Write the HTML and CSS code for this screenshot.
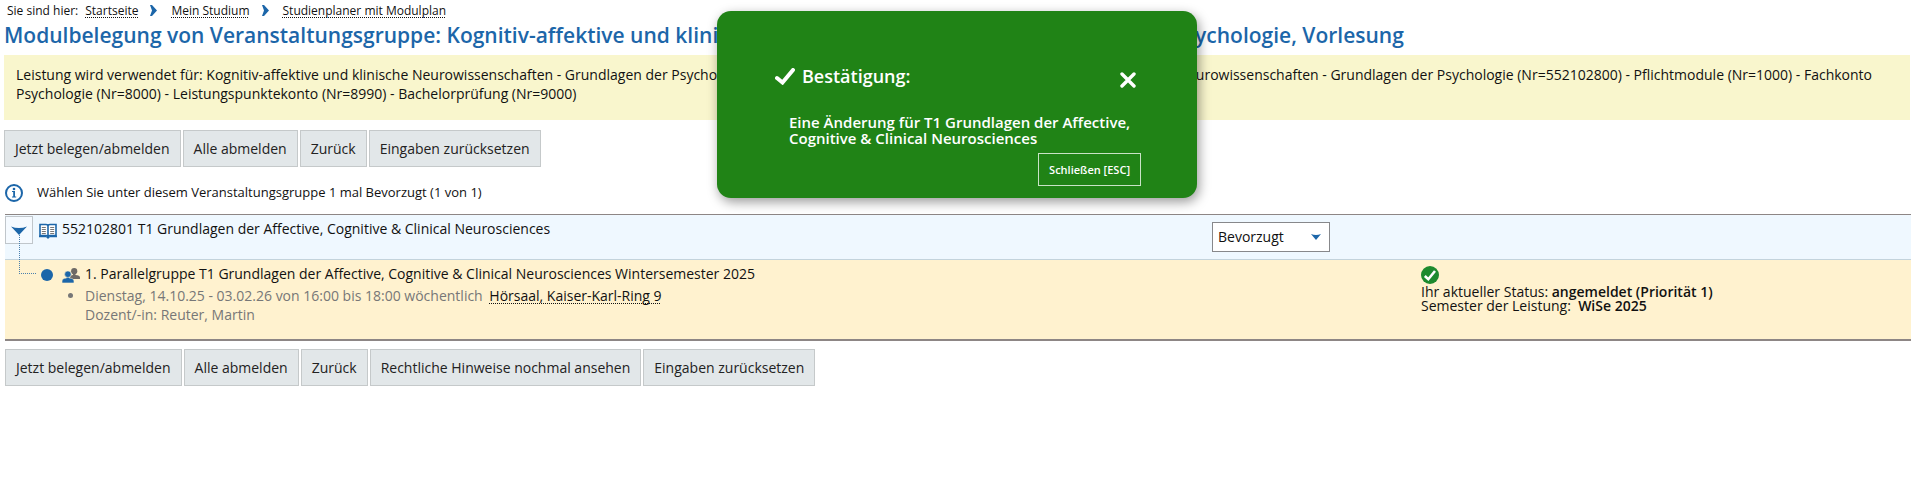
FILE: index.html
```html
<!DOCTYPE html>
<html lang="de">
<head>
<meta charset="utf-8">
<title>Modulbelegung</title>
<link rel="stylesheet" href="styles.css">
</head>
<body>
<nav class="breadcrumb" aria-label="Sie sind hier">
  <span>Sie sind hier:</span>
  <a href="#">Startseite</a>
  <svg class="sep" width="7" height="11" viewBox="0 0 7 11"><path d="M0 0 L2 0 L7 5.5 L2 11 L0 11 L2 5.5 Z" fill="#1c66a9"/></svg>
  <a href="#">Mein Studium</a>
  <svg class="sep" width="7" height="11" viewBox="0 0 7 11"><path d="M0 0 L2 0 L7 5.5 L2 11 L0 11 L2 5.5 Z" fill="#1c66a9"/></svg>
  <a href="#">Studienplaner mit Modulplan</a>
</nav>

<form id="form" name="form" method="post" action="#">
  <h1>Modulbelegung von Veranstaltungsgruppe: Kognitiv-affektive und klinische Neurowissenschaften - Grundlagen der Psychologie, Vorlesung</h1>
  <p class="notice">Leistung wird verwendet für: Kognitiv-affektive und klinische Neurowissenschaften - Grundlagen der Psychologie, Vorlesung (T 1) (Nr=552102801) - Kognitiv-affektive und klinische Neurowissenschaften - Grundlagen der Psychologie (Nr=552102800) - Pflichtmodule (Nr=1000) - Fachkonto Psychologie (Nr=8000) - Leistungspunktekonto (Nr=8990) - Bachelorprüfung (Nr=9000)</p>

  <div class="buttons">
    <button type="button">Jetzt belegen/abmelden</button>
    <button type="button">Alle abmelden</button>
    <button type="button">Zurück</button>
    <button type="reset">Eingaben zurücksetzen</button>
  </div>

  <p class="info">
    <svg width="18" height="18" viewBox="0 0 18 18"><circle cx="9" cy="9" r="8" fill="#fff" stroke="#1c66a9" stroke-width="2"/><circle cx="9" cy="5" r="1.3" fill="#1c66a9"/><path d="M7 7h3v5.5h1.2v1H7v-1h1.2V8H7z" fill="#1c66a9"/></svg>
    <span>Wählen Sie unter diesem Veranstaltungsgruppe 1 mal Bevorzugt (1 von 1)</span>
  </p>

  <table class="tree">
    <tr class="event">
      <td>
        <div class="node">
          <button type="button" class="toggle" aria-label="Zuklappen">
            <svg width="16" height="9" viewBox="0 0 16 9"><path d="M0 0.5 Q8 3.5 16 0.5 L8 9 Z" fill="#1c66a9"/></svg>
            <span class="branch"></span>
          </button>
          <svg class="book" width="18" height="16" viewBox="0 0 18 16">
            <path d="M1 1.5h6Q9 1.5 9 3Q9 1.5 11 1.5h6v11h-6Q9 12.5 9 14Q9 12.5 7 12.5H1z" fill="#fff" stroke="#1c66a9" stroke-width="1.6"/>
            <path d="M9 3v11M0 13.4h7.5M10.5 13.4H18" stroke="#1c66a9" stroke-width="1.6"/>
            <path d="M2.8 4.5h4M2.8 6.5h4M2.8 8.5h4M2.8 10.5h4M11.2 4.5h4M11.2 6.5h4M11.2 8.5h4M11.2 10.5h4" stroke="#777"/>
            <path d="M7.5 13h3v1.5L9 16l-1.5-1.5z" fill="#1c66a9"/>
          </svg>
          <label for="prio">552102801 T1 Grundlagen der Affective, Cognitive &amp; Clinical Neurosciences</label>
        </div>
      </td>
      <td class="choice">
        <select id="prio" name="prio"><option>Bevorzugt</option></select>
      </td>
      <td class="status"></td>
    </tr>
    <tr class="group">
      <td>
        <div class="node">
          <span class="dot"></span>
          <svg class="people" width="18" height="15" viewBox="0 0 18 15">
            <g fill="#6e6a66"><circle cx="12.2" cy="3.2" r="3.1"/><path d="M8 11V9.5Q8 7 11 6.9V5h2.4v1.9Q18 7.2 18 9.5V11z"/></g>
            <g fill="#1c66a9" stroke="#fff2cf" stroke-width="0.6"><path d="M0 15v-2Q0 10.4 4.5 10V8.6h2.8V10Q12 10.4 12 13v2z"/><circle cx="5.9" cy="6.2" r="3.3"/></g>
          </svg>
          <div>
            <span>1. Parallelgruppe T1 Grundlagen der Affective, Cognitive &amp; Clinical Neurosciences Wintersemester 2025</span>
            <ul>
              <li>Dienstag, 14.10.25 - 03.02.26 von 16:00 bis 18:00 wöchentlich <a href="#">Hörsaal, Kaiser-Karl-Ring 9</a><br>Dozent/-in: Reuter, Martin</li>
            </ul>
          </div>
        </div>
      </td>
      <td class="choice"></td>
      <td class="status">
        <svg width="18" height="18" viewBox="0 0 18 18"><circle cx="9" cy="9" r="9" fill="#1d8a2e"/><path d="M3.8 10 L7.3 13.2 L14 5" fill="none" stroke="#fff" stroke-width="2.6"/></svg>
        <div>Ihr aktueller Status: <b>angemeldet (Priorität 1)</b></div>
        <div>Semester der Leistung: &nbsp;<b>WiSe 2025</b></div>
      </td>
    </tr>
  </table>

  <div class="buttons bottom">
    <button type="button">Jetzt belegen/abmelden</button>
    <button type="button">Alle abmelden</button>
    <button type="button">Zurück</button>
    <button type="button">Rechtliche Hinweise nochmal ansehen</button>
    <button type="reset">Eingaben zurücksetzen</button>
  </div>
</form>

<div class="dialog" role="dialog" aria-labelledby="dialog-title">
  <div class="head">
    <svg width="20" height="17" viewBox="0 0 20 17"><path d="M2 10 L7.5 14.5 L18 2" fill="none" stroke="#fff" stroke-width="4" stroke-linecap="round"/></svg>
    <h2 id="dialog-title">Bestätigung:</h2>
    <button type="button" class="close" aria-label="Schließen">
      <svg width="16" height="16" viewBox="0 0 16 16"><path d="M2 2 L14 14 M14 2 L2 14" stroke="#fff" stroke-width="3.4" stroke-linecap="round"/></svg>
    </button>
  </div>
  <p>Eine Änderung für T1 Grundlagen der Affective, Cognitive &amp; Clinical Neurosciences</p>
  <button type="button" class="esc">Schließen [ESC]</button>
</div>
</body>
</html>
```

FILE: styles.css
```css
* { box-sizing: border-box; }
body { margin: 0; font-family: "Open Sans", "Noto Sans", Arial, sans-serif; font-size: 14px; line-height: 19px; color: #111; background-color: #fff; }
a { color: #111; text-decoration: underline dotted 1px; text-underline-offset: 2px; text-decoration-skip-ink: none; }

.breadcrumb { display: flex; align-items: center; padding: 4px 0 0 7px; font-size: 12px; line-height: 13px; }
.breadcrumb span { margin-right: 7px; }
.breadcrumb .sep { margin: 0 14px 0 12px; }

h1 { margin: 3px 0 5px 4px; font-size: 21px; line-height: 30px; font-weight: 600; color: #1c66a9; }
.notice { margin: 0 2px 10px 4px; padding: 10px 12px 17px; background-color: #f9f6cd; }

.buttons { display: flex; flex-wrap: wrap; gap: 2px; margin-left: 4px; }
.buttons.bottom { margin: 8px 0 0 5px; }
.buttons button { height: 37px; padding: 0 10px 1px; font: inherit; color: #222; background-color: #e2e7e9; border: solid 1px #c5c9ca; }

.info { display: flex; align-items: center; gap: 14px; margin: 16px 0 12px 5px; font-size: 13px; }

.tree { width: calc(100% - 6px); margin-left: 5px; border-collapse: separate; border-spacing: 0; border-top: solid 1px #8d8685; border-bottom: solid 2px #8d8685; }
.tree td { padding: 0; vertical-align: top; }
.event td { height: 45px; background-color: #eff8ff; border-bottom: solid 1px #c3d3dc; }
.group td { height: 79px; background-color: #fff2cf; }
.choice { width: 209px; }
.status { width: 490px; }
.node { display: flex; }

.toggle { position: relative; width: 28px; height: 28px; margin: 1px 6px 0 0; padding: 0; background-color: #f5faff; border: solid 1px #c0c6cb; }
.toggle svg { display: block; margin: 0 auto; }
/* line from the toggle down to the parallel group */
.branch { position: absolute; left: 13px; top: 18px; width: 17px; height: 39px; border-left: dotted 1px #4a80ad; border-bottom: dotted 1px #4a80ad; }
.book { margin-top: 8px; }
.event label { margin: 4px 0 0 5px; }
.choice select { display: block; width: 118px; height: 30px; margin-top: 7px; padding: 0 5px 2px; font: inherit; color: #111; border: solid 1px #87888b; border-radius: 0; appearance: none; background: #fff url("data:image/svg+xml,%3Csvg xmlns='http://www.w3.org/2000/svg' width='10' height='6'%3E%3Cpath d='M0 0Q5 2 10 0L5 6Z' fill='%231c66a9'/%3E%3C/svg%3E") no-repeat right 8px center; }

.group .node { padding: 4px 0 0 36px; }
.dot { width: 12px; height: 12px; margin: 5px 9px 0 0; border-radius: 50%; background-color: #1c66a9; }
.people { margin: 4px 5px 0 0; }
.group ul { margin: 3px 0 0; padding: 0; color: #777; }
.group li a { margin-left: 3px; }
.group .status { padding-top: 6px; line-height: 14px; }
.status svg { display: block; margin-bottom: 1px; }
.status b { font-weight: 600; }

.dialog { position: absolute; top: 11px; left: 2px; right: 0; width: 480px; margin: 0 auto; padding: 53px 56px 12px 58px; color: #fff; background-color: #208316; border-radius: 14px; box-shadow: 2px 4px 12px rgba(0, 0, 0, 0.4); }
.head { display: flex; align-items: center; gap: 7px; }
.head h2 { flex: 1; margin: 0; font-size: 18px; line-height: 24px; font-weight: 600; }
.close { height: 16px; margin: 8px 5px 0 0; padding: 0; background: none; border: 0; }
.close svg { display: block; }
.dialog p { margin: 26px 0 7px 14px; font-size: 15px; line-height: 16px; font-weight: 600; }
.esc { display: block; height: 33px; margin-left: auto; padding: 0 10px; font: inherit; font-size: 11px; font-weight: 600; color: #fff; background: none; border: solid 1px #c9e3c6; }
```
